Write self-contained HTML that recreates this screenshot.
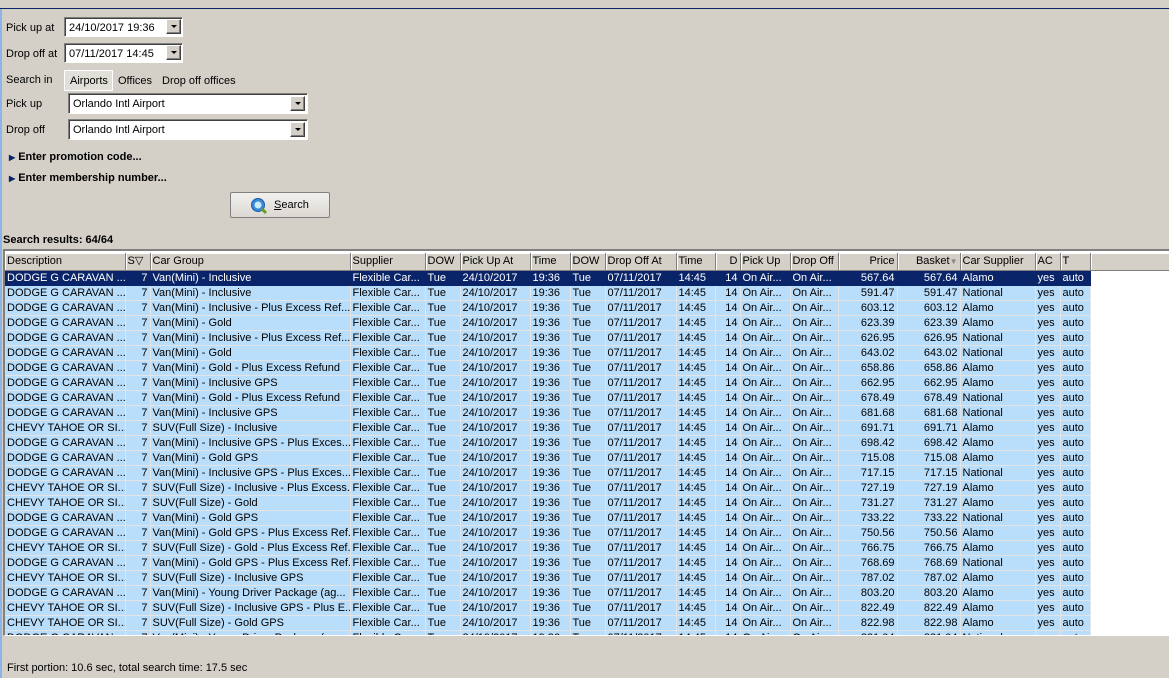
<!DOCTYPE html>
<html><head><meta charset="utf-8"><style>
*{box-sizing:border-box;margin:0;padding:0}
body{width:1169px;height:678px;background:#d4d0c8;font-family:"Liberation Sans",Tahoma,sans-serif;font-size:11px;color:#000;position:relative;overflow:hidden}
.a{position:absolute;white-space:nowrap}
.topl{position:absolute;left:0;top:0;width:1169px;height:9px;border-bottom:1px solid #0a246a;background:#d4d0c8}
.leftb{position:absolute;left:0;top:9px;width:2px;height:669px;background:#8cb4e6}
.inp{position:absolute;background:#fff;border:1px solid;border-color:#808080 #fff #fff #808080;box-shadow:inset 1px 1px 0 #404040;padding:4px 0 0 4px}
.btn{position:absolute;width:15px;height:15px;background:#d4d0c8;border:1px solid;border-color:#fff #404040 #404040 #fff;box-shadow:inset -1px -1px 0 #808080}
.btn:after{content:"";position:absolute;left:4px;top:5px;border:3px solid transparent;border-top:3px solid #000;border-bottom:0}
.grid{position:absolute;left:3px;top:249px;width:1166px;height:387px;background:#fff;border-top:2px solid #808080;border-left:2px solid #808080;border-bottom:1px solid #fff;overflow:hidden}
table{border-collapse:collapse;table-layout:fixed;position:absolute;left:0;top:2px;width:1164px}
td{height:15px;line-height:14px;padding:0;text-indent:2px;overflow:hidden;white-space:nowrap;border-right:1px solid #e4e4e4;border-bottom:1px solid #e4e4e4;background:#b9defc}
tr.h td{height:17px;background:#d4d0c8;border-right:1px solid #808080;border-bottom:1px solid #808080;box-shadow:inset 1px 1px 0 #fff}
tr.s td{background:#0a246a;color:#fff;border-color:#0a246a}
td.r{text-align:right;text-indent:0}
td.r::after{content:"";display:inline-block;width:2px}
td.e,tr.s td.e{background:#fff;border:none}
tr.h td.e{background:#d4d0c8;border-bottom:1px solid #808080}
</style></head><body>
<div class="topl"></div><div class="leftb"></div>
<div class="a" style="left:6px;top:22px">Pick up at</div>
<div class="inp" style="left:64px;top:17px;width:119px;height:20px">24/10/2017 19:36</div><div class="btn" style="left:166px;top:19px"></div>
<div class="a" style="left:6px;top:48px">Drop off at</div>
<div class="inp" style="left:64px;top:43px;width:119px;height:20px">07/11/2017 14:45</div><div class="btn" style="left:166px;top:45px"></div>
<div class="a" style="left:6px;top:74px">Search in</div>
<div class="a" style="left:64px;top:70px;width:49px;height:21px;border:1px solid #fff;background:#e2dfd9;padding:4px 0 0 5px">Airports</div>
<div class="a" style="left:118px;top:75px">Offices</div>
<div class="a" style="left:162px;top:75px">Drop off offices</div>
<div class="a" style="left:6px;top:98px">Pick up</div>
<div class="inp" style="left:68px;top:93px;width:240px;height:21px">Orlando Intl Airport</div><div class="btn" style="left:290px;top:96px"></div>
<div class="a" style="left:6px;top:124px">Drop off</div>
<div class="inp" style="left:68px;top:119px;width:240px;height:21px">Orlando Intl Airport</div><div class="btn" style="left:290px;top:122px"></div>
<div class="a" style="left:9px;top:151px;font-weight:bold"><span style="font-size:8px;color:#0a246a">&#9654;</span> Enter promotion code...</div>
<div class="a" style="left:9px;top:172px;font-weight:bold"><span style="font-size:8px;color:#0a246a">&#9654;</span> Enter membership number...</div>
<div class="a" style="left:230px;top:192px;width:100px;height:26px;border:1px solid #808080;border-radius:2px;background:linear-gradient(#f2f1ee,#dcd9d3);padding:6px 0 0 0">
<svg style="position:absolute;left:19px;top:4px" width="18" height="18" viewBox="0 0 18 18"><circle cx="8" cy="8" r="6.5" fill="#3a8ad8" stroke="#1c5aa8"/><circle cx="8" cy="8" r="3.5" fill="#c8ecf8"/><path d="M12 12l4 4" stroke="#6a9a20" stroke-width="3"/></svg>
<span style="position:absolute;left:43px;top:6px"><u>S</u>earch</span></div>
<div class="a" style="left:3px;top:234px;font-weight:bold">Search results: 64/64</div>
<div class="grid"><table>
<colgroup><col style="width:120px"><col style="width:25px"><col style="width:200px"><col style="width:75px"><col style="width:35px"><col style="width:70px"><col style="width:40px"><col style="width:35px"><col style="width:71px"><col style="width:39px"><col style="width:25px"><col style="width:50px"><col style="width:48px"><col style="width:59px"><col style="width:63px"><col style="width:75px"><col style="width:25px"><col style="width:30px"><col style="width:79px"></colgroup>
<tr class="h"><td>Description</td><td>S&#9661;</td><td>Car Group</td><td>Supplier</td><td>DOW</td><td>Pick Up At</td><td>Time</td><td>DOW</td><td>Drop Off At</td><td>Time</td><td class="r">D</td><td>Pick Up</td><td>Drop Off</td><td class="r">Price</td><td class="r">Basket<span style="color:#888;font-size:8px">&#9660;</span></td><td>Car Supplier</td><td>AC</td><td>T</td><td class="e"></td></tr>
<tr class="s"><td>DODGE G CARAVAN ...</td><td class="r">7</td><td>Van(Mini) - Inclusive</td><td>Flexible Car...</td><td>Tue</td><td>24/10/2017</td><td>19:36</td><td>Tue</td><td>07/11/2017</td><td>14:45</td><td class="r">14</td><td>On Air...</td><td>On Air...</td><td class="r">567.64</td><td class="r">567.64</td><td>Alamo</td><td>yes</td><td>auto</td><td class="e"></td></tr>
<tr><td>DODGE G CARAVAN ...</td><td class="r">7</td><td>Van(Mini) - Inclusive</td><td>Flexible Car...</td><td>Tue</td><td>24/10/2017</td><td>19:36</td><td>Tue</td><td>07/11/2017</td><td>14:45</td><td class="r">14</td><td>On Air...</td><td>On Air...</td><td class="r">591.47</td><td class="r">591.47</td><td>National</td><td>yes</td><td>auto</td><td class="e"></td></tr>
<tr><td>DODGE G CARAVAN ...</td><td class="r">7</td><td>Van(Mini) - Inclusive - Plus Excess Ref...</td><td>Flexible Car...</td><td>Tue</td><td>24/10/2017</td><td>19:36</td><td>Tue</td><td>07/11/2017</td><td>14:45</td><td class="r">14</td><td>On Air...</td><td>On Air...</td><td class="r">603.12</td><td class="r">603.12</td><td>Alamo</td><td>yes</td><td>auto</td><td class="e"></td></tr>
<tr><td>DODGE G CARAVAN ...</td><td class="r">7</td><td>Van(Mini) - Gold</td><td>Flexible Car...</td><td>Tue</td><td>24/10/2017</td><td>19:36</td><td>Tue</td><td>07/11/2017</td><td>14:45</td><td class="r">14</td><td>On Air...</td><td>On Air...</td><td class="r">623.39</td><td class="r">623.39</td><td>Alamo</td><td>yes</td><td>auto</td><td class="e"></td></tr>
<tr><td>DODGE G CARAVAN ...</td><td class="r">7</td><td>Van(Mini) - Inclusive - Plus Excess Ref...</td><td>Flexible Car...</td><td>Tue</td><td>24/10/2017</td><td>19:36</td><td>Tue</td><td>07/11/2017</td><td>14:45</td><td class="r">14</td><td>On Air...</td><td>On Air...</td><td class="r">626.95</td><td class="r">626.95</td><td>National</td><td>yes</td><td>auto</td><td class="e"></td></tr>
<tr><td>DODGE G CARAVAN ...</td><td class="r">7</td><td>Van(Mini) - Gold</td><td>Flexible Car...</td><td>Tue</td><td>24/10/2017</td><td>19:36</td><td>Tue</td><td>07/11/2017</td><td>14:45</td><td class="r">14</td><td>On Air...</td><td>On Air...</td><td class="r">643.02</td><td class="r">643.02</td><td>National</td><td>yes</td><td>auto</td><td class="e"></td></tr>
<tr><td>DODGE G CARAVAN ...</td><td class="r">7</td><td>Van(Mini) - Gold - Plus Excess Refund</td><td>Flexible Car...</td><td>Tue</td><td>24/10/2017</td><td>19:36</td><td>Tue</td><td>07/11/2017</td><td>14:45</td><td class="r">14</td><td>On Air...</td><td>On Air...</td><td class="r">658.86</td><td class="r">658.86</td><td>Alamo</td><td>yes</td><td>auto</td><td class="e"></td></tr>
<tr><td>DODGE G CARAVAN ...</td><td class="r">7</td><td>Van(Mini) - Inclusive GPS</td><td>Flexible Car...</td><td>Tue</td><td>24/10/2017</td><td>19:36</td><td>Tue</td><td>07/11/2017</td><td>14:45</td><td class="r">14</td><td>On Air...</td><td>On Air...</td><td class="r">662.95</td><td class="r">662.95</td><td>Alamo</td><td>yes</td><td>auto</td><td class="e"></td></tr>
<tr><td>DODGE G CARAVAN ...</td><td class="r">7</td><td>Van(Mini) - Gold - Plus Excess Refund</td><td>Flexible Car...</td><td>Tue</td><td>24/10/2017</td><td>19:36</td><td>Tue</td><td>07/11/2017</td><td>14:45</td><td class="r">14</td><td>On Air...</td><td>On Air...</td><td class="r">678.49</td><td class="r">678.49</td><td>National</td><td>yes</td><td>auto</td><td class="e"></td></tr>
<tr><td>DODGE G CARAVAN ...</td><td class="r">7</td><td>Van(Mini) - Inclusive GPS</td><td>Flexible Car...</td><td>Tue</td><td>24/10/2017</td><td>19:36</td><td>Tue</td><td>07/11/2017</td><td>14:45</td><td class="r">14</td><td>On Air...</td><td>On Air...</td><td class="r">681.68</td><td class="r">681.68</td><td>National</td><td>yes</td><td>auto</td><td class="e"></td></tr>
<tr><td>CHEVY TAHOE OR SI...</td><td class="r">7</td><td>SUV(Full Size) - Inclusive</td><td>Flexible Car...</td><td>Tue</td><td>24/10/2017</td><td>19:36</td><td>Tue</td><td>07/11/2017</td><td>14:45</td><td class="r">14</td><td>On Air...</td><td>On Air...</td><td class="r">691.71</td><td class="r">691.71</td><td>Alamo</td><td>yes</td><td>auto</td><td class="e"></td></tr>
<tr><td>DODGE G CARAVAN ...</td><td class="r">7</td><td>Van(Mini) - Inclusive GPS - Plus Exces...</td><td>Flexible Car...</td><td>Tue</td><td>24/10/2017</td><td>19:36</td><td>Tue</td><td>07/11/2017</td><td>14:45</td><td class="r">14</td><td>On Air...</td><td>On Air...</td><td class="r">698.42</td><td class="r">698.42</td><td>Alamo</td><td>yes</td><td>auto</td><td class="e"></td></tr>
<tr><td>DODGE G CARAVAN ...</td><td class="r">7</td><td>Van(Mini) - Gold GPS</td><td>Flexible Car...</td><td>Tue</td><td>24/10/2017</td><td>19:36</td><td>Tue</td><td>07/11/2017</td><td>14:45</td><td class="r">14</td><td>On Air...</td><td>On Air...</td><td class="r">715.08</td><td class="r">715.08</td><td>Alamo</td><td>yes</td><td>auto</td><td class="e"></td></tr>
<tr><td>DODGE G CARAVAN ...</td><td class="r">7</td><td>Van(Mini) - Inclusive GPS - Plus Exces...</td><td>Flexible Car...</td><td>Tue</td><td>24/10/2017</td><td>19:36</td><td>Tue</td><td>07/11/2017</td><td>14:45</td><td class="r">14</td><td>On Air...</td><td>On Air...</td><td class="r">717.15</td><td class="r">717.15</td><td>National</td><td>yes</td><td>auto</td><td class="e"></td></tr>
<tr><td>CHEVY TAHOE OR SI...</td><td class="r">7</td><td>SUV(Full Size) - Inclusive - Plus Excess...</td><td>Flexible Car...</td><td>Tue</td><td>24/10/2017</td><td>19:36</td><td>Tue</td><td>07/11/2017</td><td>14:45</td><td class="r">14</td><td>On Air...</td><td>On Air...</td><td class="r">727.19</td><td class="r">727.19</td><td>Alamo</td><td>yes</td><td>auto</td><td class="e"></td></tr>
<tr><td>CHEVY TAHOE OR SI...</td><td class="r">7</td><td>SUV(Full Size) - Gold</td><td>Flexible Car...</td><td>Tue</td><td>24/10/2017</td><td>19:36</td><td>Tue</td><td>07/11/2017</td><td>14:45</td><td class="r">14</td><td>On Air...</td><td>On Air...</td><td class="r">731.27</td><td class="r">731.27</td><td>Alamo</td><td>yes</td><td>auto</td><td class="e"></td></tr>
<tr><td>DODGE G CARAVAN ...</td><td class="r">7</td><td>Van(Mini) - Gold GPS</td><td>Flexible Car...</td><td>Tue</td><td>24/10/2017</td><td>19:36</td><td>Tue</td><td>07/11/2017</td><td>14:45</td><td class="r">14</td><td>On Air...</td><td>On Air...</td><td class="r">733.22</td><td class="r">733.22</td><td>National</td><td>yes</td><td>auto</td><td class="e"></td></tr>
<tr><td>DODGE G CARAVAN ...</td><td class="r">7</td><td>Van(Mini) - Gold GPS - Plus Excess Ref...</td><td>Flexible Car...</td><td>Tue</td><td>24/10/2017</td><td>19:36</td><td>Tue</td><td>07/11/2017</td><td>14:45</td><td class="r">14</td><td>On Air...</td><td>On Air...</td><td class="r">750.56</td><td class="r">750.56</td><td>Alamo</td><td>yes</td><td>auto</td><td class="e"></td></tr>
<tr><td>CHEVY TAHOE OR SI...</td><td class="r">7</td><td>SUV(Full Size) - Gold - Plus Excess Ref...</td><td>Flexible Car...</td><td>Tue</td><td>24/10/2017</td><td>19:36</td><td>Tue</td><td>07/11/2017</td><td>14:45</td><td class="r">14</td><td>On Air...</td><td>On Air...</td><td class="r">766.75</td><td class="r">766.75</td><td>Alamo</td><td>yes</td><td>auto</td><td class="e"></td></tr>
<tr><td>DODGE G CARAVAN ...</td><td class="r">7</td><td>Van(Mini) - Gold GPS - Plus Excess Ref...</td><td>Flexible Car...</td><td>Tue</td><td>24/10/2017</td><td>19:36</td><td>Tue</td><td>07/11/2017</td><td>14:45</td><td class="r">14</td><td>On Air...</td><td>On Air...</td><td class="r">768.69</td><td class="r">768.69</td><td>National</td><td>yes</td><td>auto</td><td class="e"></td></tr>
<tr><td>CHEVY TAHOE OR SI...</td><td class="r">7</td><td>SUV(Full Size) - Inclusive GPS</td><td>Flexible Car...</td><td>Tue</td><td>24/10/2017</td><td>19:36</td><td>Tue</td><td>07/11/2017</td><td>14:45</td><td class="r">14</td><td>On Air...</td><td>On Air...</td><td class="r">787.02</td><td class="r">787.02</td><td>Alamo</td><td>yes</td><td>auto</td><td class="e"></td></tr>
<tr><td>DODGE G CARAVAN ...</td><td class="r">7</td><td>Van(Mini) - Young Driver Package (ag...</td><td>Flexible Car...</td><td>Tue</td><td>24/10/2017</td><td>19:36</td><td>Tue</td><td>07/11/2017</td><td>14:45</td><td class="r">14</td><td>On Air...</td><td>On Air...</td><td class="r">803.20</td><td class="r">803.20</td><td>Alamo</td><td>yes</td><td>auto</td><td class="e"></td></tr>
<tr><td>CHEVY TAHOE OR SI...</td><td class="r">7</td><td>SUV(Full Size) - Inclusive GPS - Plus E...</td><td>Flexible Car...</td><td>Tue</td><td>24/10/2017</td><td>19:36</td><td>Tue</td><td>07/11/2017</td><td>14:45</td><td class="r">14</td><td>On Air...</td><td>On Air...</td><td class="r">822.49</td><td class="r">822.49</td><td>Alamo</td><td>yes</td><td>auto</td><td class="e"></td></tr>
<tr><td>CHEVY TAHOE OR SI...</td><td class="r">7</td><td>SUV(Full Size) - Gold GPS</td><td>Flexible Car...</td><td>Tue</td><td>24/10/2017</td><td>19:36</td><td>Tue</td><td>07/11/2017</td><td>14:45</td><td class="r">14</td><td>On Air...</td><td>On Air...</td><td class="r">822.98</td><td class="r">822.98</td><td>Alamo</td><td>yes</td><td>auto</td><td class="e"></td></tr>
<tr><td>DODGE G CARAVAN ...</td><td class="r">7</td><td>Van(Mini) - Young Driver Package (a...</td><td>Flexible Car...</td><td>Tue</td><td>24/10/2017</td><td>19:36</td><td>Tue</td><td>07/11/2017</td><td>14:45</td><td class="r">14</td><td>On Air...</td><td>On Air...</td><td class="r">831.04</td><td class="r">831.04</td><td>National</td><td>yes</td><td>auto</td><td class="e"></td></tr>
</table></div>
<div class="a" style="left:7px;top:662px">First portion: 10.6 sec, total search time: 17.5 sec</div>
</body></html>
